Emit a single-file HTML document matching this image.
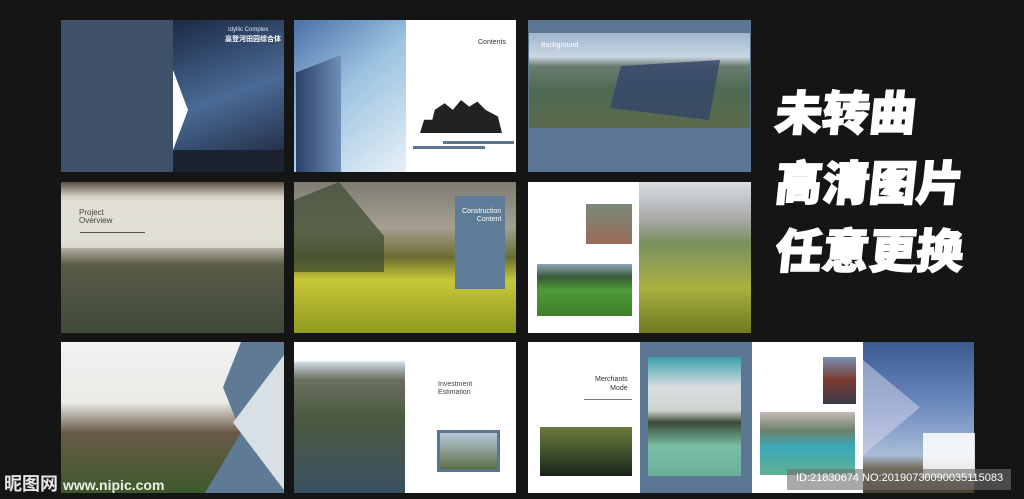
<!DOCTYPE html>
<html><head><meta charset="utf-8"><style>
*{margin:0;padding:0;box-sizing:border-box}
body{width:1024px;height:499px;background:#151515;position:relative;overflow:hidden;font-family:"Liberation Sans","Noto Sans CJK SC",sans-serif}
.p{position:absolute;overflow:hidden}
.t{position:absolute;white-space:nowrap}
.big{position:absolute;left:776px;color:#fff;font-weight:900;font-size:47px;line-height:60px;letter-spacing:0;font-family:"Noto Sans CJK SC","WenQuanYi Zen Hei",sans-serif;transform:skewX(-6deg);-webkit-text-stroke:1.5px #fff}
</style></head><body>
<!-- row1 -->
<div class="p" style="left:61px;top:20px;width:223px;height:152px;background:#3f5168"></div>
<div class="p" style="left:173px;top:20px;width:111px;height:152px;background:linear-gradient(160deg,#1b2a45,#4a6a95 50%,#1a2236)"></div>
<div class="p" style="left:173px;top:70px;width:15px;height:80px;background:#fff;clip-path:polygon(0 0,100% 50%,0 100%)"></div>
<div class="p" style="left:173px;top:150px;width:111px;height:22px;background:#1c2230"></div>
<div class="t" style="left:228px;top:27px;color:#dfe6ef;font-size:6px">Idyllic Complex</div>
<div class="t" style="left:225px;top:34px;color:#fff;font-size:7px;font-weight:bold">高登河田园综合体</div>
<div class="p" style="left:294px;top:20px;width:112px;height:152px;background:linear-gradient(140deg,#4a70a8,#9cc3e0 45%,#e8f1f7)"></div>
<div class="p" style="left:296px;top:55px;width:45px;height:117px;background:linear-gradient(90deg,#2a3f6a,#6f8fb8);clip-path:polygon(0 15%,100% 0,100% 100%,0 100%)"></div>
<div class="p" style="left:406px;top:20px;width:110px;height:152px;background:#fff"></div>
<div class="t" style="left:478px;top:39px;color:#333;font-size:7px">Contents</div>
<div class="p" style="left:420px;top:100px;width:82px;height:33px;background:#222;clip-path:polygon(0 100%,5% 60%,15% 60%,18% 30%,30% 10%,40% 30%,50% 0,60% 20%,70% 5%,80% 30%,95% 50%,100% 100%)"></div>
<div class="p" style="left:443px;top:141px;width:71px;height:3px;background:#5b7594"></div>
<div class="p" style="left:413px;top:146px;width:72px;height:3px;background:#5b7594"></div>
<div class="p" style="left:528px;top:20px;width:223px;height:152px;background:#5c7793"></div>
<div class="p" style="left:529px;top:33px;width:221px;height:95px;background:linear-gradient(180deg,#9fb6cf 0,#c9d6e2 25%,#6b7c70 35%,#4f6a54 60%,#5a6a4a)"></div>
<div class="p" style="left:610px;top:60px;width:110px;height:60px;background:#33456a;opacity:.8;clip-path:polygon(10% 10%,100% 0,90% 100%,0 80%)"></div>
<div class="t" style="left:541px;top:42px;color:#fff;font-size:7px">Background</div>
<!-- row2 -->
<div class="p" style="left:61px;top:182px;width:223px;height:151px;background:linear-gradient(180deg,#5a4f45 0,#d8d5c8 10%,#cfcdbf 40%,#5a5a48 55%,#3f4a38 100%)"></div>
<div class="p" style="left:61px;top:200px;width:223px;height:48px;background:rgba(230,228,218,.75)"></div>
<div class="t" style="left:79px;top:209px;color:#444;font-size:8px;line-height:8px">Project<br>Overview</div>
<div class="p" style="left:80px;top:232px;width:65px;height:1px;background:#555"></div>
<div class="p" style="left:294px;top:182px;width:222px;height:151px;background:linear-gradient(180deg,#807c72 0,#a59f92 30%,#6a6d30 50%,#c8c838 65%,#8f9a20 100%)"></div>
<div class="p" style="left:294px;top:182px;width:90px;height:90px;background:#3c4a30;opacity:.7;clip-path:polygon(0 20%,50% 0,100% 60%,100% 100%,0 100%)"></div>
<div class="p" style="left:455px;top:196px;width:50px;height:93px;background:#5e7c98"></div>
<div class="t" style="left:462px;top:208px;color:#fff;font-size:7px;line-height:8px;text-align:right">Construction<br>&nbsp;&nbsp;&nbsp;&nbsp;Content</div>
<div class="p" style="left:528px;top:182px;width:111px;height:151px;background:#fff"></div>
<div class="p" style="left:586px;top:204px;width:46px;height:40px;background:linear-gradient(#7a8a7a,#9a6a5a)"></div>
<div class="p" style="left:537px;top:264px;width:95px;height:52px;background:linear-gradient(#8ea5b8 0,#3a5a3a 25%,#4e9a3a 50%,#3f7f2a)"></div>
<div class="p" style="left:639px;top:182px;width:112px;height:151px;background:linear-gradient(180deg,#d9dde2 0,#a7a9a7 25%,#7a9060 40%,#a8b040 70%,#6f7a20)"></div>
<!-- row3 -->
<div class="p" style="left:61px;top:342px;width:223px;height:151px;background:#5f7a95"></div>
<div class="p" style="left:61px;top:342px;width:180px;height:151px;background:linear-gradient(180deg,#f2f2f0 0,#e9ece8 40%,#6a5a48 60%,#3c5a2c 100%);clip-path:polygon(0 0,100% 0,90% 30%,100% 60%,80% 100%,0 100%)"></div>
<div class="p" style="left:233px;top:355px;width:51px;height:135px;background:#d8dfe5;clip-path:polygon(0 50%,100% 0,100% 100%)"></div>
<div class="p" style="left:294px;top:342px;width:111px;height:151px;background:linear-gradient(180deg,#fff 0,#fff 12%,#c8d2da 14%,#6a7060 25%,#4c5a40 50%,#3a5060 100%)"></div>
<div class="p" style="left:405px;top:342px;width:111px;height:151px;background:#fff"></div>
<div class="t" style="left:438px;top:381px;color:#444;font-size:7px;line-height:8px">Investment<br>Estimation</div>
<div class="p" style="left:437px;top:430px;width:63px;height:42px;border:3px solid #5b7594;background:linear-gradient(#b8c8d8,#5a7048)"></div>
<div class="p" style="left:528px;top:342px;width:112px;height:151px;background:#fff"></div>
<div class="t" style="left:595px;top:375px;color:#333;font-size:7px;line-height:9px;text-align:right">Merchants<br>&nbsp;&nbsp;&nbsp;&nbsp;&nbsp;&nbsp;Mode</div>
<div class="p" style="left:584px;top:399px;width:48px;height:1px;background:#777"></div>
<div class="p" style="left:540px;top:427px;width:92px;height:49px;background:linear-gradient(#6a7a3a,#3a4a2a 60%,#1a2218)"></div>
<div class="p" style="left:640px;top:342px;width:112px;height:151px;background:#5c7793"></div>
<div class="p" style="left:648px;top:357px;width:93px;height:119px;background:linear-gradient(180deg,#3aa0a8 0,#d8dde0 25%,#cfd3cf 45%,#3a4a38 55%,#7abfa5 75%,#6ab09a)"></div>
<div class="p" style="left:752px;top:342px;width:111px;height:151px;background:#fff"></div>
<div class="p" style="left:823px;top:357px;width:33px;height:47px;background:linear-gradient(#7a8fb0,#7a3a30 50%,#3a3a4a)"></div>
<div class="p" style="left:760px;top:412px;width:95px;height:63px;background:linear-gradient(#c8b8b8,#6a8068 30%,#3aaabb 55%,#60b090 100%)"></div>
<div class="p" style="left:863px;top:342px;width:111px;height:151px;background:linear-gradient(180deg,#3a5a90 0,#6a88bc 40%,#a8bcd8 75%,#6a6048 85%,#4a4030)"></div>
<div class="p" style="left:863px;top:360px;width:57px;height:95px;background:rgba(220,215,235,.5);clip-path:polygon(0 0,100% 50%,0 100%)"></div>
<div class="p" style="left:923px;top:433px;width:52px;height:45px;background:rgba(255,255,255,.85)"></div>
<!-- big text -->
<div class="big" style="top:80px">未转曲</div>
<div class="big" style="top:150px">高清图片</div>
<div class="big" style="top:218px">任意更换</div>
<!-- watermarks -->
<div class="t" style="left:4px;top:470px;color:#fff;font-size:18px;font-weight:bold;opacity:.9">昵图网 <span style="font-size:14px">www.nipic.com</span></div>
<div class="p" style="left:787px;top:469px;width:224px;height:21px;background:rgba(110,110,110,.6)"></div>
<div class="t" style="left:796px;top:472px;color:#fff;font-size:11px">ID:21830674 NO:20190730090035115083</div>
</body></html>
